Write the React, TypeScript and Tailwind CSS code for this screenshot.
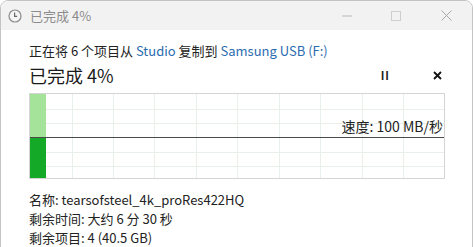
import React from "react";

const font = { fontFamily: '"Noto Sans CJK SC", "Noto Sans", sans-serif' };

function Graph() {
  const cols = [42, 83, 124, 166, 207, 249, 290, 332, 373];
  const rows = [15, 29, 58, 72];
  return (
    <div className="relative w-[416px] h-[86px] border border-[#d4d4d4] bg-white">
      {cols.map((x) => (
        <div key={x} className="absolute top-0 bottom-0 w-px bg-[#e9f0e9]" style={{ left: x }} />
      ))}
      {rows.map((y) => (
        <div key={y} className="absolute left-0 right-0 h-px bg-[#e9f0e9]" style={{ top: y }} />
      ))}
      <div className="absolute left-0 top-0 w-[16px] h-[44px] bg-[#a6e39a]" />
      <div className="absolute left-0 top-[44px] w-[16px] bottom-0 bg-[#14aa28]" />
      <div className="absolute left-0 right-0 top-[43px] h-px bg-[#4a4a4a]" />
      <div className="absolute right-[1px] top-[23px] text-[14px] leading-[19px] text-[#222]">速度: 100 MB/秒</div>
    </div>
  );
}

export default function App() {
  return (
    <div className="w-[474px] h-[247px] bg-white overflow-hidden" style={font}>
      <div className="w-[473px] h-[252px] border border-[#c4c4c4] rounded-t-[8px] overflow-hidden flex flex-col">
        <div className="h-[29px] bg-[#f2f2f2] flex items-center">
          <svg width="14" height="14" viewBox="0 0 14 14" className="ml-[7px]">
            <circle cx="7" cy="7" r="6" fill="#f4f4f4" stroke="#8a8a8a" strokeWidth="1.2" />
            <path d="M6.6 3.6 V7.3 H9.2" fill="none" stroke="#6a6a6a" strokeWidth="1.2" />
          </svg>
          <span className="ml-[8px] text-[13px] text-[#8c8c8c]">已完成 4%</span>
          <div className="ml-auto flex items-center">
            <svg width="10" height="10" viewBox="0 0 10 10" className="mr-[39px]">
              <path d="M0 5 H10" stroke="#b8b8b8" strokeWidth="1" />
            </svg>
            <svg width="10" height="10" viewBox="0 0 10 10" className="mr-[40px]">
              <rect x="0.5" y="0.5" width="9" height="9" fill="none" stroke="#cfcfcf" strokeWidth="1" />
            </svg>
            <svg width="11" height="11" viewBox="0 0 11 11" className="mr-[20px]">
              <path d="M0.5 0.5 L10.5 10.5 M10.5 0.5 L0.5 10.5" stroke="#a8a8a8" strokeWidth="1" />
            </svg>
          </div>
        </div>
        <div className="flex-1 flex flex-col pl-[28px] pr-[28px] bg-white">
          <div className="mt-[12px] text-[13px] leading-[18px] text-[#222]">
            正在将 6 个项目从 <span className="text-[#2b6cb0]">Studio</span> 复制到{" "}
            <span className="text-[#2b6cb0]">Samsung USB (F:)</span>
          </div>
          <div className="flex items-center h-[28px] mt-[1px]">
            <span className="text-[18px] text-[#1a1a1a]">已完成 4%</span>
            <span className="ml-auto mr-[43px] text-[11px] font-bold tracking-[1px] text-[#222]">II</span>
            <svg width="9" height="9" viewBox="0 0 9 9" className="mr-[2px]">
              <path d="M1 1 L8 8 M8 1 L1 8" stroke="#111" strokeWidth="1.8" />
            </svg>
          </div>
          <div className="mt-[4px]">
            <Graph />
          </div>
          <div className="mt-[11px] text-[13px] leading-[19px] text-[#222]">
            <div>名称: tearsofsteel_4k_proRes422HQ</div>
            <div>剩余时间: 大约 6 分 30 秒</div>
            <div>剩余项目: 4 (40.5 GB)</div>
          </div>
        </div>
      </div>
    </div>
  );
}
